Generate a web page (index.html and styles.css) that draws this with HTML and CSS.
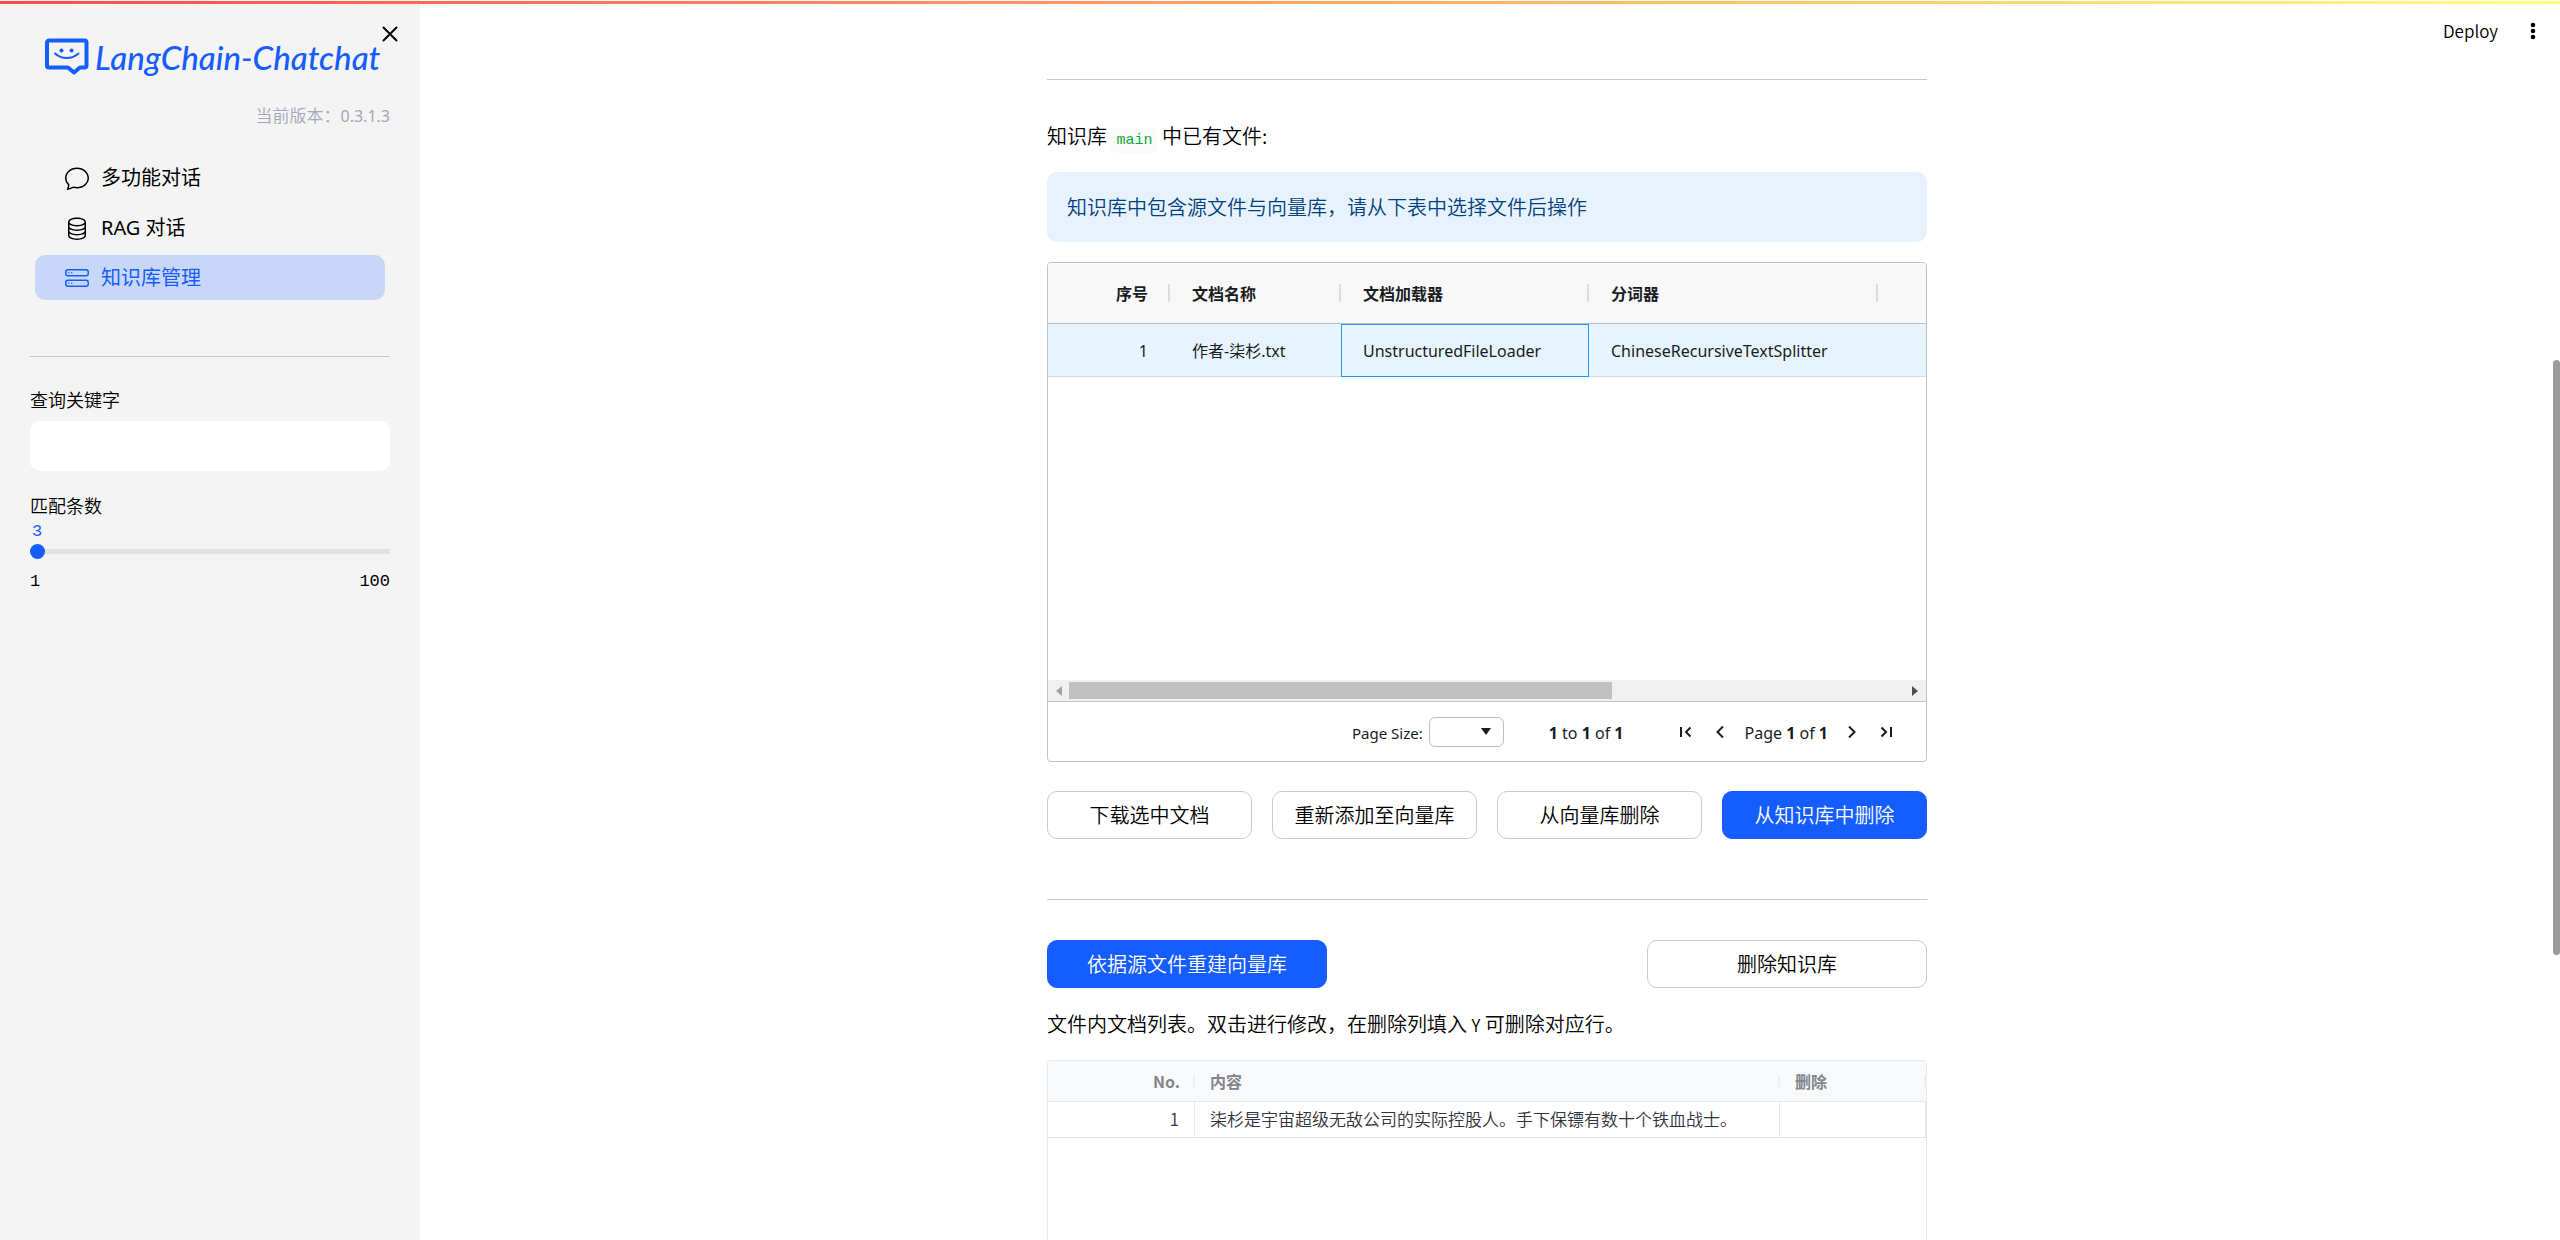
FILE: index.html
```html
<!DOCTYPE html>
<html lang="zh-CN">
<head>
<meta charset="utf-8">
<title>LangChain-Chatchat</title>
<link rel="stylesheet" href="styles.css">
</head>
<body>
<div class="decoration"></div>
<aside class="sidebar">
  <button class="close" type="button" aria-label="关闭侧边栏">
    <svg width="16" height="16" viewBox="0 0 16 16"><path d="M1.500 1.500l13 13M14.500 1.500l-13 13" stroke="currentColor" stroke-width="2" stroke-linecap="round"/></svg>
  </button>
  <a class="logo" href="#">
    <svg width="44" height="38" viewBox="0 0 44 38" fill="none" stroke="currentColor" stroke-linejoin="round" stroke-linecap="round">
      <path d="M4 2.500h35.500a2 2 0 0 1 2 2v23a2 2 0 0 1-2 2h-4.500l-6 5-6-5h-19a2 2 0 0 1-2-2v-23a2 2 0 0 1 2-2z" stroke-width="4"/>
      <path d="M10 15.500c6.500 6 17 6 23.500 0" stroke-width="2"/>
      <circle cx="16.500" cy="12.500" r="2" fill="currentColor" stroke="none"/>
      <circle cx="26.500" cy="12.500" r="2" fill="currentColor" stroke="none"/>
    </svg>
    <span>LangChain-Chatchat</span>
  </a>
  <p class="version">当前版本：<small>0.3.1.3</small></p>
  <nav class="menu">
    <a href="#">
      <svg width="24" height="24" viewBox="0 0 16 16" fill="currentColor"><path d="M2.678 11.894a1 1 0 0 1 .287.801 11 11 0 0 1-.398 2c1.395-.323 2.247-.697 2.634-.893a1 1 0 0 1 .71-.074A8 8 0 0 0 8 14c3.996 0 7-2.807 7-6s-3.004-6-7-6-7 2.808-7 6c0 1.468.617 2.830 1.678 3.894m-.493 3.905a22 22 0 0 1-.713.129c-.2.032-.352-.176-.273-.362a10 10 0 0 0 .244-.637l.003-.01c.248-.72.45-1.548.524-2.319C.743 11.370 0 9.760 0 8c0-3.866 3.582-7 8-7s8 3.134 8 7-3.582 7-8 7a9 9 0 0 1-2.347-.306c-.52.263-1.639.742-3.468 1.105"/></svg>
      多功能对话
    </a>
    <a href="#">
      <svg width="24" height="24" viewBox="0 0 16 16" fill="currentColor"><path d="M4.318 2.687C5.234 2.271 6.536 2 8 2s2.766.27 3.682.687C12.644 3.125 13 3.627 13 4c0 .374-.356.875-1.318 1.313C10.766 5.729 9.464 6 8 6s-2.766-.27-3.682-.687C3.356 4.875 3 4.373 3 4c0-.374.356-.875 1.318-1.313M13 5.698V7c0 .374-.356.875-1.318 1.313C10.766 8.729 9.464 9 8 9s-2.766-.27-3.682-.687C3.356 7.875 3 7.373 3 7V5.698c.271.202.58.378.904.525C4.978 6.711 6.427 7 8 7s3.022-.289 4.096-.777A5 5 0 0 0 13 5.698M14 4c0-1.007-.875-1.755-1.904-2.223C11.022 1.289 9.573 1 8 1s-3.022.289-4.096.777C2.875 2.245 2 2.993 2 4v9c0 1.007.875 1.755 1.904 2.223C4.978 15.710 6.427 16 8 16s3.022-.289 4.096-.777C13.125 14.755 14 14.007 14 13zm-1 4.698V10c0 .374-.356.875-1.318 1.313C10.766 11.729 9.464 12 8 12s-2.766-.27-3.682-.687C3.356 10.875 3 10.373 3 10V8.698c.271.202.58.378.904.525C4.978 9.710 6.427 10 8 10s3.022-.289 4.096-.777A5 5 0 0 0 13 8.698m0 3V13c0 .374-.356.875-1.318 1.313C10.766 14.729 9.464 15 8 15s-2.766-.27-3.682-.687C3.356 13.875 3 13.373 3 13v-1.302c.271.202.58.378.904.525C4.978 12.710 6.427 13 8 13s3.022-.289 4.096-.777c.324-.147.633-.323.904-.525"/></svg>
      RAG 对话
    </a>
    <a href="#" class="active" aria-current="page">
      <svg width="24" height="24" viewBox="0 0 16 16" fill="currentColor"><path d="M14 10a1 1 0 0 1 1 1v1a1 1 0 0 1-1 1H2a1 1 0 0 1-1-1v-1a1 1 0 0 1 1-1zM2 9a2 2 0 0 0-2 2v1a2 2 0 0 0 2 2h12a2 2 0 0 0 2-2v-1a2 2 0 0 0-2-2z"/><path d="M5 11.500a.5.5 0 1 1-1 0 .5.5 0 0 1 1 0m-2 0a.5.5 0 1 1-1 0 .5.5 0 0 1 1 0M14 3a1 1 0 0 1 1 1v1a1 1 0 0 1-1 1H2a1 1 0 0 1-1-1V4a1 1 0 0 1 1-1zM2 2a2 2 0 0 0-2 2v1a2 2 0 0 0 2 2h12a2 2 0 0 0 2-2V4a2 2 0 0 0-2-2z"/><path d="M5 4.500a.5.5 0 1 1-1 0 .5.5 0 0 1 1 0m-2 0a.5.5 0 1 1-1 0 .5.5 0 0 1 1 0"/></svg>
      知识库管理
    </a>
  </nav>
  <hr>
  <div class="field">
    <label for="keyword">查询关键字</label>
    <input id="keyword" class="textbox" type="text">
  </div>
  <div class="slider">
    <label for="topk">匹配条数</label>
    <output for="topk">3</output>
    <input id="topk" type="range" min="1" max="100" value="3">
    <div class="limits"><span>1</span><span>100</span></div>
  </div>
</aside>

<main class="main">
  <header class="toolbar">
    <button type="button">Deploy</button>
    <button type="button" aria-label="菜单">
      <svg width="6" height="18" viewBox="0 0 6 18" fill="currentColor"><circle cx="3" cy="3" r="2.300"/><circle cx="3" cy="9" r="2.300"/><circle cx="3" cy="15" r="2.300"/></svg>
    </button>
  </header>
  <div class="content">
    <hr>
    <p class="heading">知识库 <code>main</code> 中已有文件:</p>
    <div class="info">知识库中包含源文件与向量库，请从下表中选择文件后操作</div>

    <section class="grid">
      <table class="files">
        <colgroup><col class="c-no"><col class="c-name"><col class="c-loader"><col class="c-splitter"><col></colgroup>
        <thead>
          <tr><th class="num">序号</th><th>文档名称</th><th>文档加载器</th><th>分词器</th><th></th></tr>
        </thead>
        <tbody>
          <tr><td class="num">1</td><td>作者-柒杉.txt</td><td class="focus">UnstructuredFileLoader</td><td>ChineseRecursiveTextSplitter</td><td></td></tr>
        </tbody>
      </table>
      <div class="hscroll">
        <svg width="6" height="10" viewBox="0 0 6 10"><path d="M6 0v10L0 5z" fill="#a3a3a3"/></svg>
        <div class="htrack"><div class="hthumb"></div></div>
        <svg width="6" height="10" viewBox="0 0 6 10"><path d="M0 0v10l6-5z" fill="#505050"/></svg>
      </div>
      <footer class="pager">
        <label for="page-size">Page Size:</label>
        <div class="select">
          <select id="page-size"><option></option></select>
          <svg width="10" height="7" viewBox="0 0 10 7"><path d="M0 0h10L5 7z" fill="#181d1f"/></svg>
        </div>
        <span class="summary"><b>1</b> to <b>1</b> of <b>1</b></span>
        <div class="pages">
          <button type="button" aria-label="首页"><svg width="12" height="12" viewBox="0 0 12 12"><path d="M1 1v10M10.500 1.500L6 6l4.500 4.500"/></svg></button>
          <button type="button" aria-label="上一页"><svg width="12" height="12" viewBox="0 0 12 12"><path d="M9 .5L3.500 6 9 11.500"/></svg></button>
          <span>Page <b>1</b> of <b>1</b></span>
          <button type="button" aria-label="下一页"><svg width="12" height="12" viewBox="0 0 12 12"><path d="M3 .5L8.500 6 3 11.500"/></svg></button>
          <button type="button" aria-label="末页"><svg width="12" height="12" viewBox="0 0 12 12"><path d="M11 1v10M1.500 1.500L6 6l-4.500 4.500"/></svg></button>
        </div>
      </footer>
    </section>

    <div class="actions">
      <button class="btn" type="button">下载选中文档</button>
      <button class="btn" type="button">重新添加至向量库</button>
      <button class="btn" type="button">从向量库删除</button>
      <button class="btn primary" type="button">从知识库中删除</button>
    </div>
    <hr>
    <div class="actions wide">
      <button class="btn primary" type="button">依据源文件重建向量库</button>
      <button class="btn" type="button">删除知识库</button>
    </div>
    <p class="hint">文件内文档列表。双击进行修改，在删除列填入 <small>Y</small> 可删除对应行。</p>

    <section class="docs-grid">
      <table class="docs">
        <colgroup><col class="d-no"><col><col class="d-del"></colgroup>
        <thead><tr><th class="num">No.</th><th>内容</th><th>删除</th></tr></thead>
        <tbody><tr><td class="num">1</td><td>柒杉是宇宙超级无敌公司的实际控股人。手下保镖有数十个铁血战士。</td><td></td></tr></tbody>
      </table>
    </section>
  </div>
  <div class="vthumb"></div>
</main>
</body>
</html>
```
FILE: styles.css
```css
* { box-sizing: border-box; }

body {
  margin: 0;
  height: 100vh;
  display: flex;
  overflow: hidden;
  background: #fff;
  color: #000;
  font: 350 20px/32px "Noto Sans CJK SC", sans-serif;
}

p { margin: 0; }
hr { width: 100%; height: 1px; margin: 0; border: 0; background: #c8c8c8; }
button { padding: 0; border: 0; background: none; color: inherit; font: inherit; cursor: pointer; }
a { color: inherit; text-decoration: none; }
svg { display: block; flex: none; }

.decoration {
  position: absolute;
  top: 1px;
  left: 0;
  right: 0;
  height: 3px;
  z-index: 2;
  background: linear-gradient(90deg, #ff4b4b, #fffd80);
}

/* sidebar */
.sidebar {
  position: relative;
  flex: none;
  width: 420px;
  padding: 36px 30px 0;
  background: #f4f4f4;
}
.close { position: absolute; top: 26px; right: 22px; }
.logo {
  display: flex;
  align-items: center;
  gap: 6px;
  height: 42px;
  padding-left: 15px;
  color: #165dff;
  font: italic 500 33px/42px Lato, sans-serif;
  white-space: nowrap;
}
.version {
  margin-top: 21px;
  color: #a3a8b8;
  font-size: 17px;
  text-align: right;
}
.version small { font: 400 16px/20px "Noto Sans", sans-serif; }
.menu {
  display: flex;
  flex-direction: column;
  gap: 5px;
  margin: 24px 5px 56px;
  font-family: "Noto Sans", "Noto Sans CJK SC", sans-serif;
  font-weight: 400;
}
.menu a {
  display: flex;
  align-items: center;
  gap: 12px;
  height: 45px;
  padding-left: 30px;
  border-radius: 10px;
}
.menu .active { background: #c8d7f7; color: #165dff; }

.field { margin-top: 28px; font-size: 18px; line-height: 28px; }
.field label, .slider label { display: block; }
.textbox {
  display: block;
  width: 100%;
  height: 50px;
  margin-top: 8px;
  padding: 0 16px;
  border: 0;
  border-radius: 10px;
  background: #fff;
  font: inherit;
}
.slider { margin-top: 20px; font-size: 18px; line-height: 28px; }
.slider output {
  display: block;
  padding: 1px 0 0 2px;
  color: #165dff;
  font: 400 17px/24px "Liberation Mono", monospace;
}
.slider input {
  display: block;
  width: calc(100% + 14px);
  height: 15px;
  margin: 0 -7px;
  appearance: none;
  background: linear-gradient(#e2e2e2, #e2e2e2) center / calc(100% - 14px) 5px no-repeat;
}
.slider input::-webkit-slider-thumb {
  appearance: none;
  width: 15px;
  height: 15px;
  border-radius: 50%;
  background: #165dff;
}
.limits {
  display: flex;
  justify-content: space-between;
  margin-top: 11px;
  font: 400 17px/24px "Liberation Mono", monospace;
}

/* main column */
.main {
  position: relative;
  flex: 1;
  min-width: 0;
  padding: 79px 6px 0 0;
  overflow: hidden;
}
.toolbar {
  position: absolute;
  top: 15px;
  right: 24px;
  display: flex;
  align-items: center;
  gap: 32px;
  font-size: 17px;
}
.toolbar button { line-height: 32px; }
.content { max-width: 880px; margin: 0 auto; }
.vthumb {
  position: absolute;
  top: 360px;
  right: 0;
  width: 7px;
  height: 595px;
  border-radius: 4px;
  background: #9a9a98;
}

.heading { margin: 40px 0 20px; }
.heading code {
  padding: 4px 5px;
  border-radius: 5px;
  background: #fafafa;
  color: #09ab3b;
  font: 400 15px/17px "Liberation Mono", monospace;
}
.info {
  margin-bottom: 20px;
  padding: 19px 20px;
  border-radius: 10px;
  background: #e8f2fc;
  color: #004280;
}

table { width: 100%; border-collapse: separate; border-spacing: 0; table-layout: fixed; }
th { position: relative; text-align: left; }
.num { text-align: right; }

/* file grid */
.grid {
  display: flex;
  flex-direction: column;
  height: 500px;
  border: 1px solid #bfc3c6;
  border-radius: 4px;
  overflow: hidden;
  color: #181d1f;
  font: 400 16px/24px "Noto Sans", "Noto Sans CJK SC", sans-serif;
}
.c-no { width: 122px; }
.c-name { width: 171px; }
.c-loader { width: 248px; }
.c-splitter { width: 289px; }
.files th {
  height: 61px;
  padding: 2px 22px 0;
  border-bottom: 1px solid #babfc7;
  background: #f8f8f8;
  font-weight: 700;
}
.files th:not(:last-child)::after {
  content: "";
  position: absolute;
  top: 21px;
  right: 0;
  width: 2px;
  height: 18px;
  background: #dddddd;
}
.files td {
  height: 53px;
  padding: 2px 22px 0;
  border-bottom: 1px solid #d9dcde;
  background: #e7f4fe;
  white-space: nowrap;
}
.files td.focus { border: 1px solid #2196f3; padding: 1px 21px 0; }

.hscroll {
  display: flex;
  align-items: center;
  height: 22px;
  margin-top: auto;
  padding: 0 8px;
  border-bottom: 1px solid #bfc3c6;
  background: #f0f0f0;
}
.htrack { flex: 1; margin: 0 7px; }
.hthumb { width: 65%; height: 17px; background: #c0c0c0; }

.pager {
  display: flex;
  align-items: center;
  justify-content: flex-end;
  height: 59px;
  padding-right: 30px;
}
.pager label, .pager span { padding-top: 2px; }
.pager label { font-size: 15px; }
.select { position: relative; margin: 0 45px 0 6px; }
.select select {
  display: block;
  width: 75px;
  height: 30px;
  border: 1px solid #babfc7;
  border-radius: 6px;
  background: #fff;
  appearance: none;
}
.select svg { position: absolute; top: 11px; right: 13px; pointer-events: none; }
.pages { display: flex; align-items: center; gap: 14px; margin-left: 53px; }
.pages button { display: flex; justify-content: center; width: 20px; }
.pages svg { fill: none; stroke: #181d1f; stroke-width: 2; }

/* buttons */
.actions { display: grid; grid-template-columns: repeat(4, 1fr); gap: 20px; margin: 29px 0 60px; }
.actions.wide { grid-template-columns: 280px 280px; justify-content: space-between; margin: 40px 0 20px; }
.btn {
  height: 48px;
  border: 1px solid #cacaca;
  border-radius: 10px;
  background: #fff;
}
.btn.primary { border-color: #165dff; background: #165dff; color: #fff; }
.hint { margin-bottom: 20px; }
.hint small { font-size: 17px; line-height: 20px; }

/* document chunks */
.docs-grid {
  height: 500px;
  border: 1px solid #e6e8ea;
  border-radius: 4px;
  overflow: hidden;
  color: #31333f;
  font-size: 17px;
  line-height: 24px;
}
.d-no { width: 147px; }
.d-del { width: 146px; }
.docs th {
  height: 41px;
  padding: 0 15px;
  border-bottom: 1px solid #e6e8ea;
  background: #f8f9fb;
  color: #83858c;
  font-size: 16px;
  font-weight: 700;
}
.docs th::after {
  content: "";
  position: absolute;
  top: 14px;
  right: 0;
  width: 2px;
  height: 12px;
  background: #eceef0;
}
.docs td {
  height: 36px;
  padding: 0 15px 1px;
  border-right: 1px solid #e6e8ea;
  border-bottom: 1px solid #dfe1e4;
  white-space: nowrap;
}
```
